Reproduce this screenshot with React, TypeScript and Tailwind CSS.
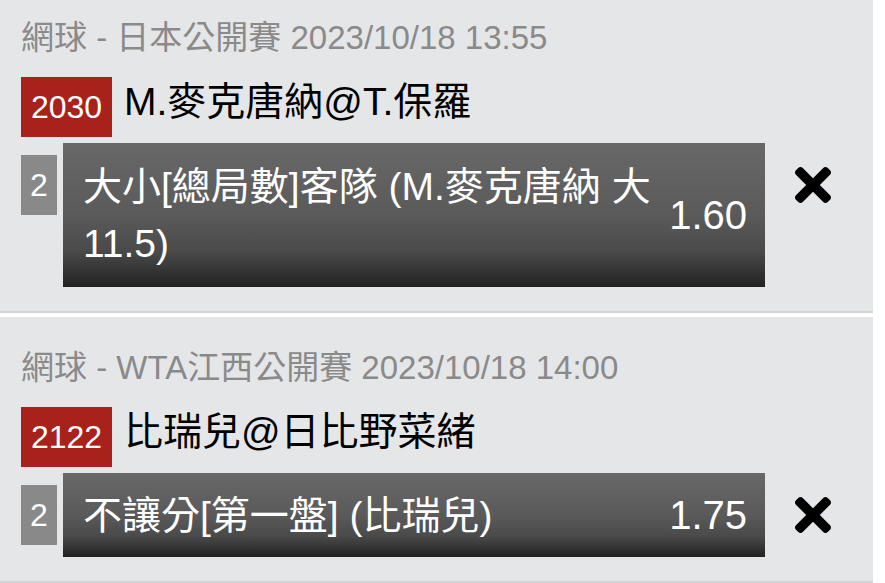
import React from "react";

type Bet = {
  header: string;
  code: string;
  title: string;
  num: string;
  lines: string[];
  odds: string;
  pt: string;
  boxH: string;
};

const bets: Bet[] = [
  {
    header: "網球 - 日本公開賽 2023/10/18 13:55",
    code: "2030",
    title: "M.麥克唐納@T.保羅",
    num: "2",
    lines: ["大小[總局數]客隊 (M.麥克唐納 大", "11.5)"],
    odds: "1.60",
    pt: "pt-[16px]",
    boxH: "h-[144px]",
  },
  {
    header: "網球 - WTA江西公開賽 2023/10/18 14:00",
    code: "2122",
    title: "比瑞兒@日比野菜緒",
    num: "2",
    lines: ["不讓分[第一盤] (比瑞兒)"],
    odds: "1.75",
    pt: "pt-[29px]",
    boxH: "h-[84px]",
  },
];

function CloseIcon() {
  return (
    <svg width="38" height="36" viewBox="0 80 352 352" fill="#000">
      <path d="M242.72 256l100.07-100.07c12.28-12.28 12.28-32.19 0-44.48l-22.24-22.24c-12.28-12.28-32.19-12.28-44.48 0L176 189.28 75.93 89.21c-12.28-12.28-32.19-12.28-44.48 0L9.21 111.45c-12.28 12.28-12.28 32.19 0 44.48L109.28 256 9.21 356.07c-12.28 12.28-12.28 32.19 0 44.48l22.24 22.24c12.28 12.28 32.2 12.28 44.48 0L176 322.72l100.07 100.07c12.28 12.28 32.2 12.28 44.48 0l22.24-22.24c12.28-12.28 12.28-32.19 0-44.48L242.72 256z" />
    </svg>
  );
}

function BetItem({ bet }: { bet: Bet }) {
  return (
    <div
      className={`w-[873px] bg-[#e5e6e8] border-b-2 border-[#d3d4d6] mb-[4px] pb-[24px] pl-[21px] ${bet.pt}`}
    >
      <div className="h-[44px] flex items-center text-[33px] text-[#8a8a8a] whitespace-nowrap">
        {bet.header}
      </div>
      <div className="mt-[17px] flex items-start">
        <div className="w-[91px] h-[60px] bg-[#a8211a] text-white text-[32px] flex items-center justify-center">
          {bet.code}
        </div>
        <div className="ml-[12px] text-[39px] leading-[50px] text-black whitespace-nowrap">
          {bet.title}
        </div>
      </div>
      <div className="mt-[6px] flex items-start">
        <div className="mt-[12px] w-[36px] h-[60px] bg-[#898989] text-white text-[32px] flex items-center justify-center">
          {bet.num}
        </div>
        <div
          className={`ml-[6px] w-[702px] ${bet.boxH} flex items-center gap-2 pl-[20px] pr-[18px] bg-[linear-gradient(to_bottom,#686868_0%,#5a5a5a_50%,#4a4a4a_75%,#222222_100%)]`}
        >
          <div className="flex-1 min-w-0 text-white text-[39px] leading-[57px]">
            {bet.lines.map((l, i) => (
              <React.Fragment key={i}>
                {i > 0 && <br />}
                {l}
              </React.Fragment>
            ))}
          </div>
          <div className="shrink-0 text-white text-[40px] leading-none">{bet.odds}</div>
        </div>
        <div className="ml-[29px] mt-[24px]">
          <CloseIcon />
        </div>
      </div>
    </div>
  );
}

export default function App() {
  return (
    <div className="w-full min-h-screen bg-white font-['Liberation_Sans','Noto_Sans_CJK_TC',sans-serif]">
      {bets.map((b, i) => (
        <BetItem key={i} bet={b} />
      ))}
    </div>
  );
}
